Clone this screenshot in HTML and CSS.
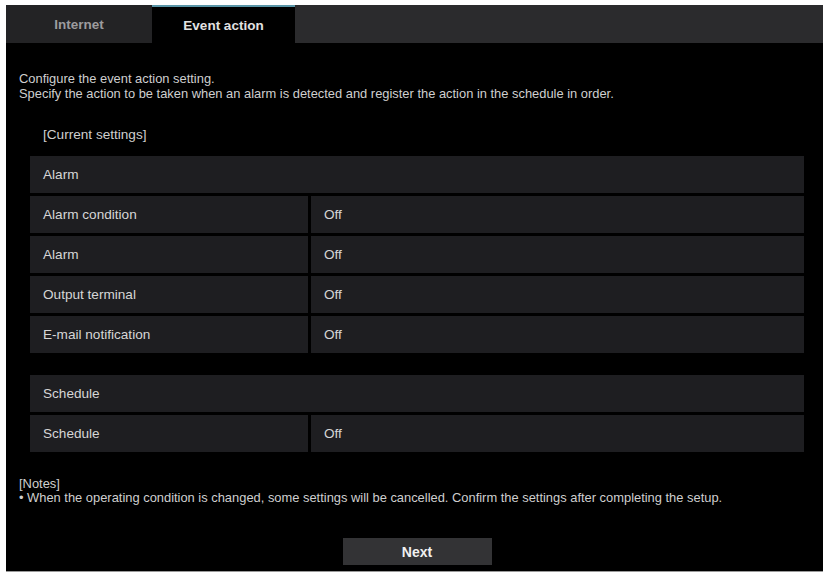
FILE: index.html
```html
<!DOCTYPE html>
<html lang="en">
<head>
<meta charset="utf-8">
<title>Event action</title>
<link rel="stylesheet" href="styles.css">
</head>
<body>
<div class="frame">
  <nav class="tabs">
    <div class="tab">Internet</div>
    <div class="tab tab-active">Event action</div>
  </nav>
  <main class="content">
    <p class="intro">Configure the event action setting.<br>Specify the action to be taken when an alarm is detected and register the action in the schedule in order.</p>
    <p class="caption">[Current settings]</p>

    <section class="table">
      <div class="row-head">Alarm</div>
      <div class="cell">Alarm condition</div><div class="cell">Off</div>
      <div class="cell">Alarm</div><div class="cell">Off</div>
      <div class="cell">Output terminal</div><div class="cell">Off</div>
      <div class="cell">E-mail notification</div><div class="cell">Off</div>
    </section>

    <section class="table table-schedule">
      <div class="row-head">Schedule</div>
      <div class="cell">Schedule</div><div class="cell">Off</div>
    </section>

    <div class="notes">
      <p>[Notes]</p>
      <p>• When the operating condition is changed, some settings will be cancelled. Confirm the settings after completing the setup.</p>
    </div>

    <div class="actions">
      <button class="btn" type="button">Next</button>
    </div>
  </main>
</div>
</body>
</html>
```

FILE: styles.css
```css
html, body {
  margin: 0;
  padding: 0;
  background: #ffffff;
}

body {
  font-family: "Liberation Sans", Arial, sans-serif;
  color: #d4d4d4;
}

.frame {
  margin: 5px 0 0 6px;
  height: 567px;
  background: #000000;
  display: flex;
  flex-direction: column;
  border-bottom: 1px solid #9a9a9a;
  box-sizing: border-box;
}

/* tab strip */
.tabs {
  display: flex;
  height: 38px;
  background: #2b2b2d;
  flex: none;
}

.tab {
  width: 146px;
  display: flex;
  align-items: center;
  justify-content: center;
  font-size: 13.5px;
  font-weight: bold;
  color: #9c9c9e;
  background: #232325;
}

.tab-active {
  width: 143px;
  background: #000000;
  color: #e2e2e2;
  border-top: 2px solid #5a96a8;
  box-sizing: border-box;
}

/* page body */
.content {
  flex: 1;
  padding: 28px 19px 0 24px;
  display: flex;
  flex-direction: column;
}

.intro {
  margin: 0 0 0 -11px;
  font-size: 12.9px;
  line-height: 15px;
  color: #cfcfcf;
}

.caption {
  margin: 27px 0 0 13px;
  font-size: 13.6px;
  line-height: 14px;
  color: #cfcfcf;
}

.table {
  margin-top: 14px;
  display: grid;
  grid-template-columns: 278px 1fr;
  grid-auto-rows: 37px;
  gap: 3px;
}

.table-schedule {
  margin-top: 22px;
}

.row-head,
.cell {
  background: #1e1e21;
  display: flex;
  align-items: center;
  padding-left: 13px;
  font-size: 13.6px;
  color: #d6d6d6;
}

.row-head {
  grid-column: 1 / -1;
}

.notes {
  margin: 25px 0 0 -11px;
  font-size: 12.9px;
  line-height: 14px;
  color: #cfcfcf;
}

.notes p {
  margin: 0;
}

.actions {
  margin-top: 33px;
  display: flex;
  justify-content: center;
}

.btn {
  width: 149px;
  height: 27px;
  border: none;
  background: #333335;
  color: #f0f0f0;
  font-family: "Liberation Sans", Arial, sans-serif;
  font-size: 14px;
  font-weight: bold;
}
```
